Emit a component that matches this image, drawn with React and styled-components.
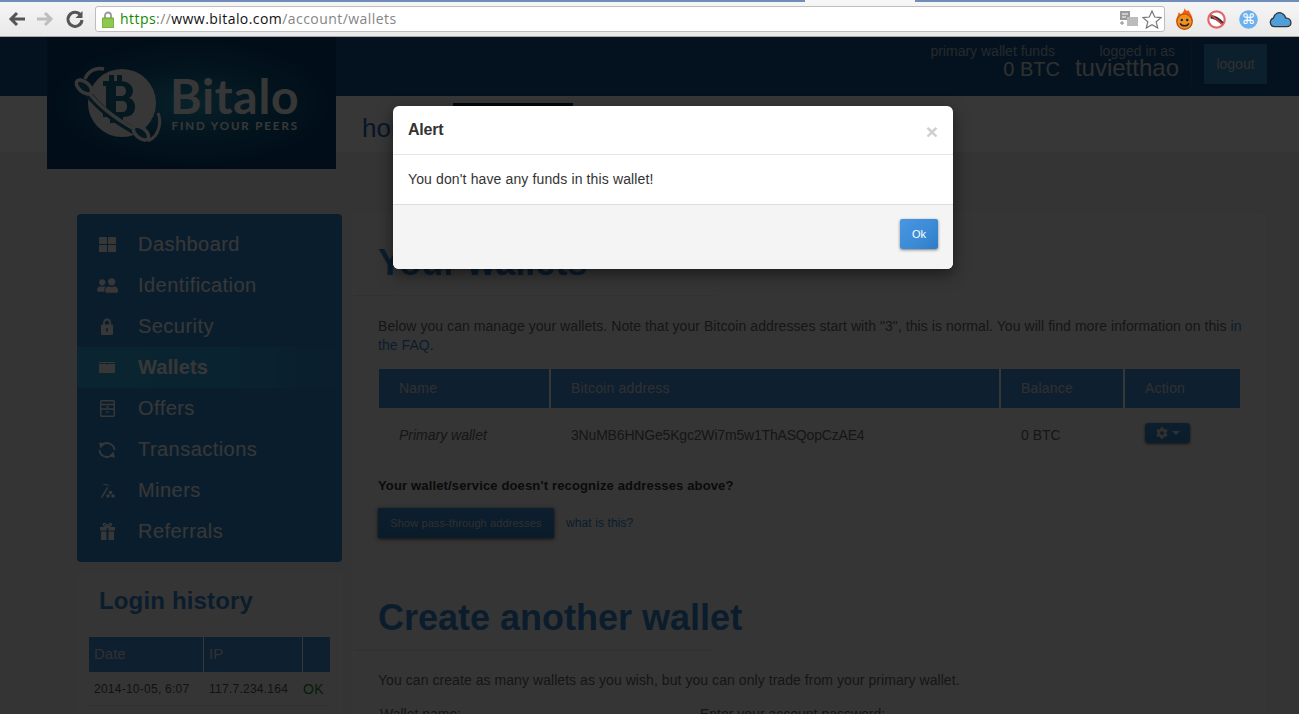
import React from "react";
import styled, { createGlobalStyle } from "styled-components";
import { FaThLarge, FaUserFriends, FaCog } from "react-icons/fa";

const Global = createGlobalStyle`
  html, body { margin: 0; padding: 0; background: #fff; }
  * { box-sizing: border-box; }
  body { font-family: "Liberation Sans", Arial, sans-serif; color: #666; }
`;

const Screen = styled.div`
  width: 1299px; height: 714px; overflow: hidden; display: flex; flex-direction: column;
`;

/* browser chrome */
const Chrome = styled.div`
  height: 37px; flex: none; display: flex; flex-direction: column;
  background: linear-gradient(#f6f6f6, #e9e9e9); border-bottom: 1px solid #a8a8a8;
`;
const TabStrip = styled.div`
  height: 2px; flex: none; display: flex;
  background: #6f8db8;
`;
const TabGap = styled.div`
  width: 110px; margin-left: 805px; background: #f6f6f6;
`;
const ToolRow = styled.div`
  flex: 1; display: flex; align-items: center; padding: 0 8px 0 7px;
`;
const NavIcon = styled.svg`
  width: 20px; height: 20px; flex: none; margin-right: ${p => p.$gap}px;
`;
const Omnibox = styled.div`
  width: 1070px; height: 26px; flex: none; display: flex; align-items: center;
  background: #fff; border: 1px solid #bdbdbd; border-radius: 3px; padding: 0 2px 0 6px;
`;
const Url = styled.div`
  flex: 1; margin-left: 6px; padding-bottom: 2px; font-size: 14px; letter-spacing: .44px; white-space: nowrap; color: #858585;
  font-family: "Open Sans", "Liberation Sans", sans-serif;
`;
const Https = styled.span`color: #108a00;`;
const Host = styled.span`color: #111;`;
const ExtRow = styled.div`
  display: flex; align-items: center; margin-left: 8px; gap: 9px;
`;
const Ext = styled.svg`width: 23px; height: 23px; flex: none;`;

/* page */
const Page = styled.div`
  position: relative; flex: 1; overflow: hidden; background: #fff;
`;
const TopBar = styled.div`
  height: 59px; background: #145591; display: flex; align-items: flex-start; padding-left: 47px; position: relative; z-index: 2;
`;
const LogoBox = styled.div`
  width: 289px; height: 132px; flex: none; display: flex; align-items: center; justify-content: center; padding-right: 4px;
  background: radial-gradient(ellipse 140px 62px at 50% 50%, #2a9cc4 0%, #0f5f88 55%, #07437a 100%);
`;
const Stats = styled.div`
  flex: 1; display: flex; justify-content: flex-end; align-items: flex-start; padding: 7px 32px 0 0;
`;
const Stat = styled.div`
  display: flex; flex-direction: column; align-items: flex-end; margin-right: ${p => p.$mr}px;
`;
const StatLabel = styled.div`
  font-size: 14px; line-height: 15px; color: #a9bccb; margin-right: ${p => p.$mr}px;
`;
const StatValue = styled.div`
  font-size: ${p => p.$size}px; line-height: 22px; margin-top: ${p => p.$mt}px; color: #dcdcdc;
`;
const VRule = styled.div`
  width: 1px; height: 42px; background: #1e629e; margin-right: 12px;
`;
const Logout = styled.div`
  width: 63px; height: 40px; display: flex; align-items: center; justify-content: center;
  background: #3a8fd0; color: #dcdcdc; font-size: 14px;
`;

const NavBar = styled.div`
  height: 57px; background: #fff; border-bottom: 1px solid #ececec; display: flex; align-items: flex-start; padding-left: 362px;
`;
const NavLink = styled.div`
  font-size: 26px; line-height: 32px; color: #2a66b0; margin-top: 16px; width: 91px; flex: none;
`;
const NavActive = styled.div`
  width: 120px; height: 60px; margin-top: 7px; flex: none; background: #0a2238;
`;

const Body = styled.div`
  display: flex; gap: 10px; padding: 61px 0 0 77px; align-items: flex-start; background: #efefef;
  height: 640px;
`;
const Side = styled.div`
  width: 265px; flex: none; display: flex; flex-direction: column; gap: 10px;
`;
const Menu = styled.div`
  background: #3288d1; border-radius: 4px; padding: 10px 0 11px; height: 348px;
`;
const MenuRow = styled.div`
  height: 41px; display: flex; align-items: center; padding-left: 21px; font-size: 20px; letter-spacing: ${p => p.$active ? ".1px" : ".45px"};
  color: #fff; font-weight: ${p => p.$active ? 700 : 400};
  background: ${p => p.$active ? "linear-gradient(90deg, #2fa8e0, #30a0dc 60%, #3288d1)" : "transparent"};
`;
const MenuIcon = styled.span`
  width: 18px; height: 18px; flex: none; margin-right: 22px; display: flex; align-items: center; justify-content: center;
  svg { display: block; flex: none; }
`;
const FlipIcon = styled(FaUserFriends)`transform: scaleX(-1);`;
const HistoryCard = styled.div`
  background: #f4f4f4; border: 1px solid #fafafa; border-radius: 4px; padding: 12px 11px 0; height: 200px;
`;
const HistoryTitle = styled.div`
  font-size: 24px; font-weight: 700; line-height: 32px; color: #3488d0; letter-spacing: .15px; padding-left: 10px; margin-bottom: 20px;
`;
const HistoryGrid = styled.div`
  display: grid; grid-template-columns: 115px 99px 27px; width: 241px;
`;
const HistoryHead = styled.div`
  height: 35px; background: #428fdc; color: #ddd; font-size: 15px; display: flex; align-items: center; padding: 0 0 2px 5px;
  border-right: 1px solid #fff;
  &:nth-child(3) { border-right: none; }
`;
const HistoryCell = styled.div`
  height: 34px; font-size: ${p => p.$ok ? 14 : 12}px; letter-spacing: .25px; display: flex; align-items: center; padding-left: ${p => p.$ok ? 0 : 5}px; color: ${p => p.$ok ? "#1f8a14" : "#555"};
  border-bottom: 1px solid #e4e4e4; white-space: nowrap;
`;

const Main = styled.div`
  width: 914px; flex: none; height: 580px; background: #f4f4f4; border: 1px solid #fafafa; border-radius: 4px; padding: 27px 25px 0;
`;
const Title = styled.h1`
  margin: 0; font-size: 36px; font-weight: 700; line-height: 42px; color: #3488d0; white-space: nowrap;
`;
const TitleRule = styled.div`
  height: 1px; width: 362px; margin: 11px 0 0 -25px; background: #e4e4e4;
`;
const Para = styled.p`
  margin: ${p => p.$mt}px 0 0; font-size: 14px; line-height: 19px; letter-spacing: .06px; color: #666; width: 866px;
`;
const Link = styled.a`color: #3488d0; text-decoration: none;`;
const Table = styled.div`
  margin: 14px 0 0 1px; width: 861px; display: grid; grid-template-columns: 172px 450px 124px 115px;
`;
const Th = styled.div`
  height: 39px; background: #428fdc; color: #ddd; font-size: 14px; display: flex; align-items: center; padding: 0 0 2px 20px; border-right: 2px solid #fff; letter-spacing: .2px;
  &:nth-child(4) { border-right: none; }
`;
const Td = styled.div`
  height: 54px; font-size: 14px; display: flex; align-items: center; padding-left: 20px; color: #666; font-style: ${p => p.$italic ? "italic" : "normal"};
  letter-spacing: ${p => p.$tight ? "-.18px" : "0"}; white-space: nowrap;
`;
const GearBtn = styled.div`
  width: 45px; height: 20px; margin-top: -4px; border-radius: 3px; background: linear-gradient(#3c8fd8, #327fc0); color: #ddd; display: flex; align-items: center; justify-content: center; gap: 4px;
  font-size: 12px; box-shadow: 0 1px 3px rgba(0,0,0,.6);
`;
const Caret = styled.span`
  width: 0; height: 0; border: 4px solid transparent; border-top-color: #ddd; border-bottom: 0;
`;
const Bold = styled.div`
  margin-top: 15px; font-size: 13px; line-height: 17px; font-weight: 700; color: #333; letter-spacing: .15px;
`;
const PassRow = styled.div`
  margin-top: 14px; display: flex; align-items: center; gap: 12px;
`;
const PassBtn = styled.div`
  width: 176px; height: 30px; background: linear-gradient(#3c8fd8, #2f7cc0); color: #d8d8d8; font-size: 11px; display: flex; align-items: center; justify-content: center;
  box-shadow: 0 1px 4px rgba(0,0,0,.7); letter-spacing: .1px;
`;
const PassLink = styled(Link)`font-size: 12px; letter-spacing: .1px;`;
const Title2 = styled(Title)`margin-top: 59px;`;
const FormRow = styled.div`
  display: grid; grid-template-columns: 320px 1fr; margin-top: 16px; font-size: 14px; line-height: 17px; padding-left: 2px; color: #666;
`;

/* overlay and dialog */
const Backdrop = styled.div`
  position: absolute; inset: 0; background: rgba(0,0,0,.785); z-index: 10;
`;
const Dialog = styled.div`
  position: absolute; left: 393px; top: 69px; width: 560px; height: 163px; z-index: 11; background: #fff; border-radius: 6px; overflow: hidden;
  box-shadow: 0 5px 15px rgba(0,0,0,.5); display: flex; flex-direction: column;
`;
const DialogHead = styled.div`
  height: 49px; flex: none; border-bottom: 1px solid #e5e5e5; display: flex; align-items: center; justify-content: space-between; padding: 0 15px;
`;
const DialogTitle = styled.div`
  font-size: 16px; font-weight: 700; color: #333; margin-top: -1px; letter-spacing: -.2px;
`;
const Close = styled.div`
  font-size: 21px; font-weight: 700; line-height: 1; color: #cfcfcf; margin: 3px 0 0 0;
`;
const DialogBody = styled.div`
  height: 49px; flex: none; padding: 0 15px 1px; display: flex; align-items: center; font-size: 14px; letter-spacing: .13px; color: #333;
`;
const DialogFoot = styled.div`
  flex: 1; border-top: 1px solid #ddd; background: #f4f4f4; display: flex; justify-content: flex-end; padding: 14px 15px 0;
`;
const OkBtn = styled.div`
  width: 38px; height: 30px; border-radius: 2px; background: linear-gradient(135deg, #4a96e2, #3a8ad6 60%, #2f7cc6); color: #fff; font-size: 11px; display: flex; align-items: center; justify-content: center;
  box-shadow: 0 1px 3px rgba(0,0,0,.5);
`;

const LogoSvg = () => (
  <svg width="232" height="84" viewBox="0 0 232 84" fill="none">
    <circle cx="48" cy="42" r="34" fill="#fff" />
    <g transform="translate(1 3)">
      <path fillRule="evenodd" fill="#1a6f94" d="M34 11h5v6h3v-6h5v6c7 1 11 5 11 10 0 3-2 6-4 7 4 1 6 5 6 9 0 7-5 10-12 10v6h-5v-6h-3v6h-5v-6h-7v-5h3V22h-3v-5h6zm7 11v10h5c3 0 5-2 5-5s-2-5-5-5zm0 15v11h6c3 0 5-2 5-5.500S50 37 47 37z" />
    </g>
    <path d="M8 24C18 40 36 58 68 74" stroke="#1a6f94" strokeWidth="7" />
    <path d="M12 28C22 42 38 56 62 69" stroke="#fff" strokeWidth="3.500" />
    <ellipse cx="10" cy="26" rx="9" ry="5" transform="rotate(40 10 26)" fill="#1a6f94" stroke="#fff" strokeWidth="3.500" />
    <ellipse cx="67" cy="72" rx="9" ry="5" transform="rotate(40 67 72)" fill="#1a6f94" stroke="#fff" strokeWidth="3.500" />
    <path d="M11 18C14 10 22 6 30 8" stroke="#fff" strokeWidth="3.500" />
    <path d="M84 52c3 7 3 22-10 28" stroke="#fff" strokeWidth="3" />
    <text x="96" y="53" fill="#fff" fontFamily="Lato, 'Open Sans', sans-serif" fontWeight="700" fontSize="48" letterSpacing=".7">Bitalo</text>
    <text x="97.500" y="69" fill="#fff" fontFamily="Lato, 'Open Sans', sans-serif" fontWeight="700" fontSize="11.500" letterSpacing="1.900">FIND YOUR PEERS</text>
  </svg>
);

const LockIcon = () => (
  <svg width="12" height="17" viewBox="0 0 12 17"><path d="M3 7V4.500a3 3 0 0 1 6 0V7" fill="none" stroke="#fff" strokeWidth="1.800" /><path fill="#fff" fillRule="evenodd" d="M1 6.500h10a1 1 0 0 1 1 1V16a1 1 0 0 1-1 1H1a1 1 0 0 1-1-1V7.500a1 1 0 0 1 1-1zM6 10a1.300 1.300 0 0 0-.6 2.400V14h1.200v-1.600A1.300 1.300 0 0 0 6 10z" /></svg>
);
const WalletIcon = () => (
  <svg width="16" height="11" viewBox="0 0 16 11"><path fill="#fff" d="M0 0h16v11H0zM0 1v1h7l1 1 1-1h7V1z" fillRule="evenodd" /></svg>
);
const OffersIcon = () => (
  <svg width="15" height="17" viewBox="0 0 15 17" fill="none" stroke="#fff"><rect x=".7" y=".7" width="13.600" height="15.600" rx="1" strokeWidth="1.400" /><path d="M1 4.500h13M1 9h13" strokeWidth="1.400"/><path d="M6 6.800h3M6 12h3" strokeWidth="1.200" /></svg>
);
const CycleIcon = () => (
  <svg width="18" height="18" viewBox="0 0 18 18" fill="none" stroke="#fff" strokeWidth="1.800"><path d="M3.500 4.500A7.500 7.500 0 0 1 16.500 9" /><path d="M14.500 13.500A7.500 7.500 0 0 1 1.500 9" /><path fill="#fff" stroke="none" d="M1 1.500l6 1L2.500 7.500zM17 16.500l-6-1 4.500-5z" /></svg>
);
const MinerIcon = () => (
  <svg width="15" height="15" viewBox="0 0 15 15" fill="#fff"><path d="M1 14 7 4l1.200.7L2.300 15z" /><path d="M2.500 1.500C5 .5 8 1 10 3.500 8 2.500 5.500 2 2.500 1.500z" /><circle cx="8" cy="13" r="1.800" /><circle cx="13" cy="13" r="1.800" /><circle cx="10.500" cy="9.500" r="1.800" /></svg>
);
const GiftIcon = () => (
  <svg width="15" height="17" viewBox="0 0 15 17" fill="#fff"><path d="M0 4h6.500v3.500H0zM8.500 4H15v3.500H8.500zM1 8.500h5.500V17H1zM8.500 8.500H14V17H8.500z" /><path d="M7 4C5 3.500 3 2.500 3.500 1S6.500.5 7.500 4C8.500.5 11 0 11.500 1S10 3.500 8 4z" fill="none" stroke="#fff" strokeWidth="1.300" /></svg>
);

const menu = [
  ["Dashboard", <FaThLarge size={17} />],
  ["Identification", <FlipIcon size={21} />],
  ["Security", <LockIcon />],
  ["Wallets", <WalletIcon />, true],
  ["Offers", <OffersIcon />],
  ["Transactions", <CycleIcon />],
  ["Miners", <MinerIcon />],
  ["Referrals", <GiftIcon />],
];

export default function App() {
  return (
    <Screen>
      <Global />
      <Chrome>
        <TabStrip><TabGap /></TabStrip>
        <ToolRow>
          <NavIcon $gap={8} viewBox="0 0 20 20"><path d="M18 10H5M10 4l-6 6 6 6" fill="none" stroke="#555" strokeWidth="3" /></NavIcon>
          <NavIcon $gap={10} viewBox="0 0 20 20"><path d="M2 10h13M10 4l6 6-6 6" fill="none" stroke="#bdbdbd" strokeWidth="3" /></NavIcon>
          <NavIcon $gap={10} viewBox="0 0 20 20"><path d="M15.500 6A7 7 0 1 0 17 11" fill="none" stroke="#555" strokeWidth="3" /><path d="M17.500 2v7h-7z" fill="#555" /></NavIcon>
          <Omnibox>
            <svg width="12" height="17" viewBox="0 0 12 17"><path d="M3 8V4.500a3 3 0 0 1 6 0V8" fill="none" stroke="#999" strokeWidth="1.800" /><rect y="7" width="12" height="10" rx="1" fill="#8ec94f" stroke="#6aa12e" /></svg>
            <Url><Https>https</Https>://<Host>www.bitalo.com</Host>/account/wallets</Url>
            <svg width="20" height="16" viewBox="0 0 20 16"><rect x="1" y="0" width="10" height="9" fill="#9a9a9a" /><rect x="8" y="6" width="11" height="9" fill="#bcbcbc" /><path d="M3 3h6M3 6h4" stroke="#fff" /><path d="M1 12h4M3 10v4" stroke="#888" /></svg>
            <svg style={{ marginLeft: 3 }} width="20" height="19" viewBox="0 0 20 19"><path d="M10 1l2.700 6 6.300.6-4.800 4.200 1.500 6.200L10 14.700 4.300 18l1.500-6.200L1 7.600 7.300 7z" fill="#fff" stroke="#777" strokeWidth="1.200" /></svg>
          </Omnibox>
          <ExtRow>
            <Ext viewBox="0 0 21 21"><path d="M10.500 0c1 3 3 3 4 2 0 2 3.500 4 3.500 10a7.500 7.500 0 0 1-15 0c0-4 2-5 2-8 1 0 2 1 2 2 1-1 3.500-3 3.500-6z" fill="#f2600f" /><circle cx="10.500" cy="12.500" r="7" fill="#f09020" stroke="#b3500c" /><circle cx="8" cy="11" r="1.100" fill="#222" /><circle cx="13" cy="11" r="1.100" fill="#222" /><path d="M6.500 14c1.500 3 6.500 3 8 0" stroke="#222" strokeWidth="1.300" fill="none" /></Ext>
            <Ext viewBox="0 0 21 21"><circle cx="10.500" cy="10.500" r="7.500" fill="#fff" stroke="#e0686a" strokeWidth="2" /><path d="M5 8c3 0 7 2 11 6" stroke="#333" strokeWidth="3" /><path d="M5 6l11 9" stroke="#d84a4a" strokeWidth="1.500" /></Ext>
            <Ext viewBox="0 0 21 21"><circle cx="10.500" cy="10.500" r="8.500" fill="#6db0ee" /><text x="10.500" y="15" fill="#fff" textAnchor="middle" fontSize="13" fontFamily="DejaVu Sans, sans-serif">⌘</text></Ext>
            <Ext viewBox="0 0 21 21"><path d="M5 17a4 4 0 0 1-1-7.800C5 5 9 3 12 5c2 1 3 3 3 4 3 0 5 2 5 4.500S18 17 16 17z" fill="#4f9fdb" stroke="#333" strokeWidth="1.200" /></Ext>
          </ExtRow>
        </ToolRow>
      </Chrome>
      <Page>
        <TopBar>
          <LogoBox><LogoSvg /></LogoBox>
          <Stats>
            <Stat $mr={15}><StatLabel $mr={5}>primary wallet funds</StatLabel><StatValue $size={20} $mt={-1}>0 BTC</StatValue></Stat>
            <Stat $mr={12}><StatLabel $mr={4}>logged in as</StatLabel><StatValue $size={24} $mt={-2}>tuvietthao</StatValue></Stat>
            <VRule />
            <Logout>logout</Logout>
          </Stats>
        </TopBar>
        <NavBar>
          <NavLink>home</NavLink>
          <NavActive />
        </NavBar>
        <Body>
          <Side>
            <Menu>
              {menu.map(([label, icon, active]) => (
                <MenuRow key={label} $active={active}><MenuIcon>{icon}</MenuIcon>{label}</MenuRow>
              ))}
            </Menu>
            <HistoryCard>
              <HistoryTitle>Login history</HistoryTitle>
              <HistoryGrid>
                <HistoryHead>Date</HistoryHead><HistoryHead>IP</HistoryHead><HistoryHead />
                <HistoryCell>2014-10-05, 6:07</HistoryCell><HistoryCell>117.7.234.164</HistoryCell><HistoryCell $ok>OK</HistoryCell>
              </HistoryGrid>
            </HistoryCard>
          </Side>
          <Main>
            <Title>Your wallets</Title>
            <TitleRule />
            <Para $mt={21}>Below you can manage your wallets. Note that your Bitcoin addresses start with "3", this is normal. You will find more information on this <Link>in the FAQ</Link>.</Para>
            <Table>
              <Th>Name</Th><Th>Bitcoin address</Th><Th>Balance</Th><Th>Action</Th>
              <Td $italic>Primary wallet</Td><Td $tight>3NuMB6HNGe5Kgc2Wi7m5w1ThASQopCzAE4</Td><Td>0 BTC</Td>
              <Td><GearBtn><FaCog /><Caret /></GearBtn></Td>
            </Table>
            <Bold>Your wallet/service doesn't recognize addresses above?</Bold>
            <PassRow><PassBtn>Show pass-through addresses</PassBtn><PassLink>what is this?</PassLink></PassRow>
            <Title2>Create another wallet</Title2>
            <TitleRule />
            <Para $mt={20}>You can create as many wallets as you wish, but you can only trade from your primary wallet.</Para>
            <FormRow><div>Wallet name:</div><div>Enter your account password:</div></FormRow>
          </Main>
        </Body>
        <Backdrop />
        <Dialog>
          <DialogHead><DialogTitle>Alert</DialogTitle><Close>×</Close></DialogHead>
          <DialogBody>You don't have any funds in this wallet!</DialogBody>
          <DialogFoot><OkBtn>Ok</OkBtn></DialogFoot>
        </Dialog>
      </Page>
    </Screen>
  );
}
